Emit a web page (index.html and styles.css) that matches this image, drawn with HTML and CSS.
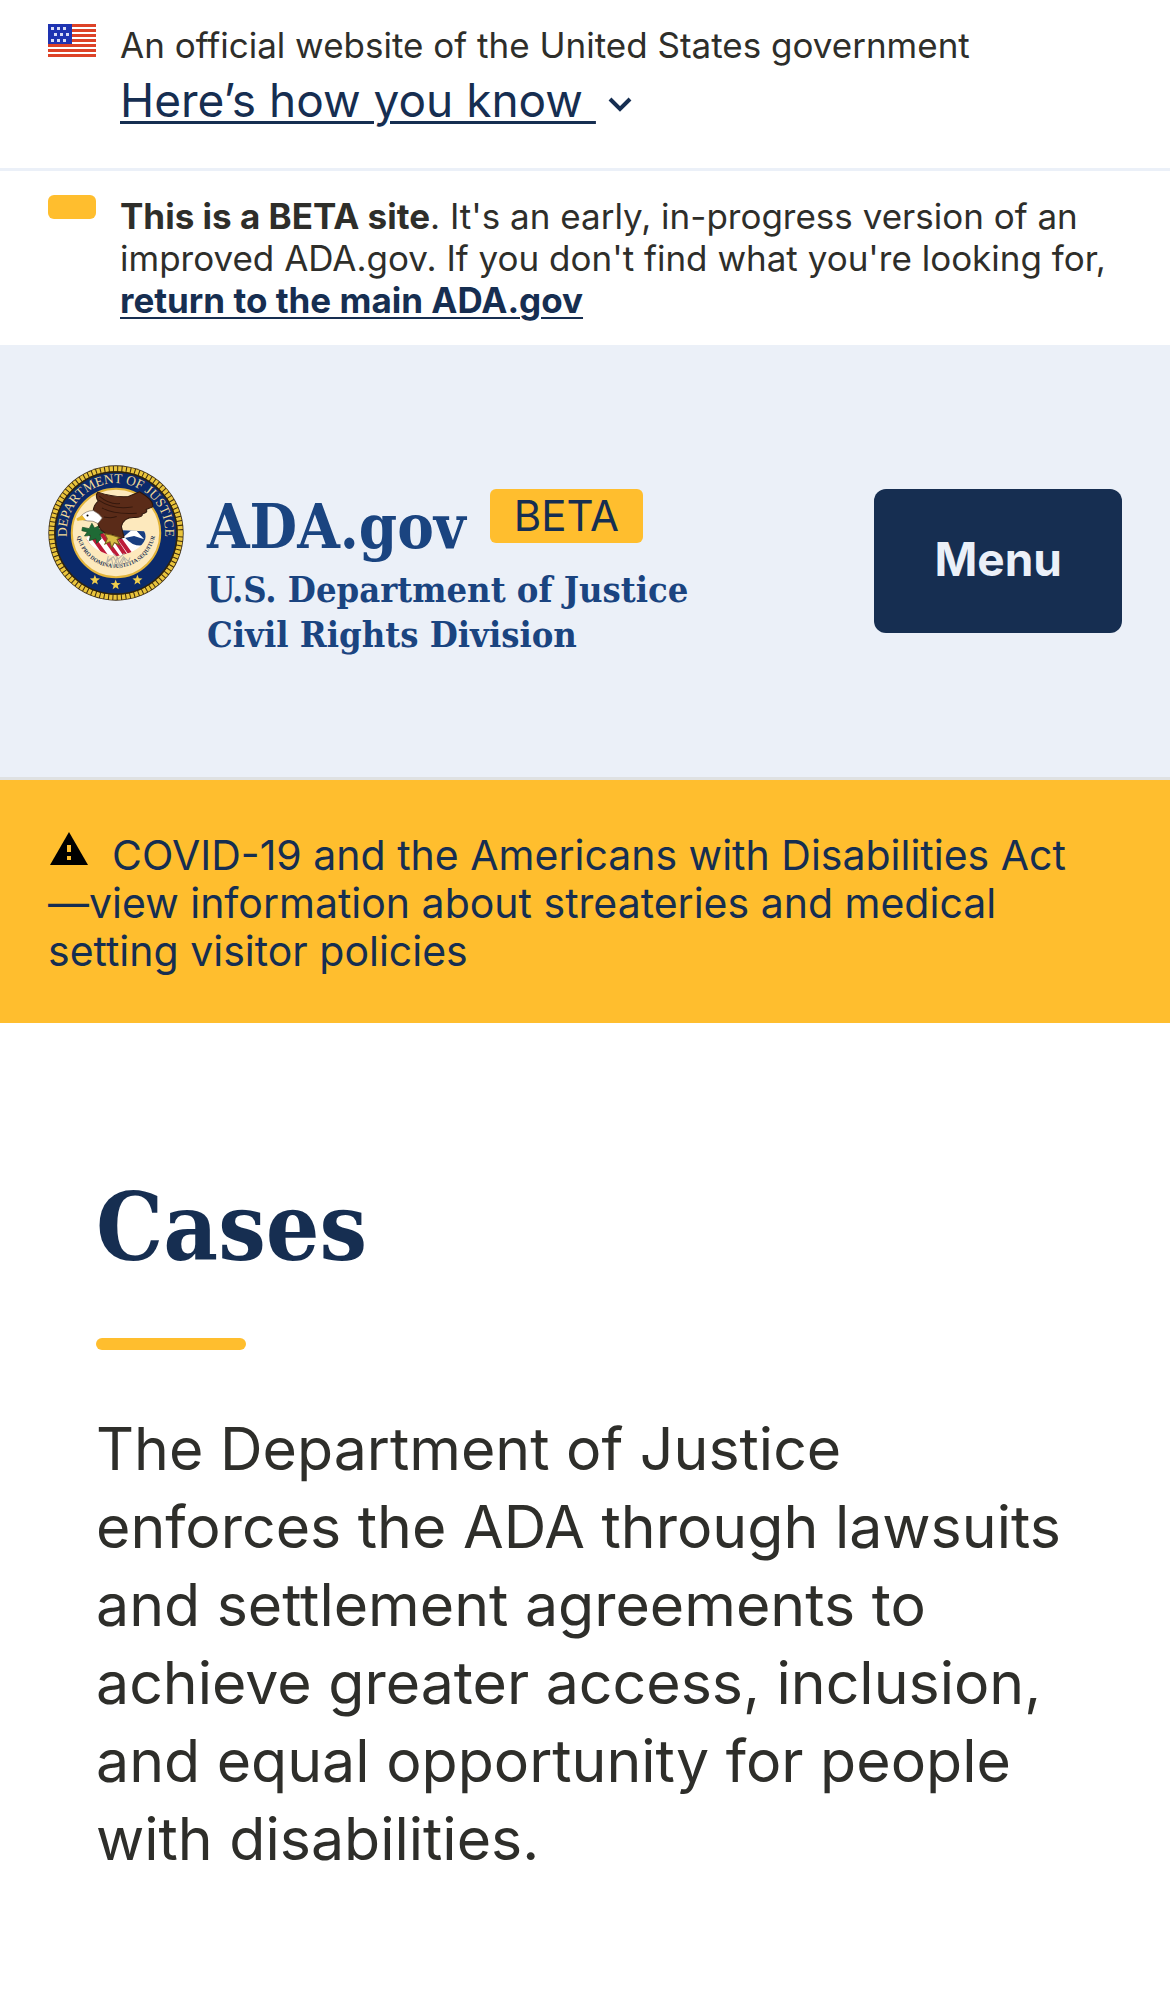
FILE: index.html
```html
<!DOCTYPE html>
<html lang="en">
<head>
<meta charset="utf-8">
<meta name="viewport" content="width=device-width, initial-scale=1">
<title>Cases | ADA.gov</title>
<link rel="stylesheet" href="styles.css">
</head>
<body>
<section class="banner" aria-label="Official government website">
  <svg class="flag" viewBox="0 0 48 33" aria-hidden="true">
    <rect width="48" height="33" fill="#fff"/>
    <path d="M0 1.5h48M0 6.5h48M0 11.5h48M0 16.5h48M0 21.5h48M0 26.5h48M0 31.5h48" stroke="#dd4227" stroke-width="3"/>
    <rect width="24" height="20" fill="#1e33b1"/>
    <path d="M3 4.500h3m3 0h3m3 0h3M6 10.500h3m3 0h3m3 0h3M3 16.500h3m3 0h3m3 0h3" stroke="#d9dcf6" stroke-width="3"/>
  </svg>
  <div class="banner-text">
    <p>An official website of the United States government</p>
    <button class="know" type="button"><span class="know-label">Here’s how you know&nbsp;</span><svg class="caret" viewBox="0 0 24 15" aria-hidden="true"><path d="M2 2l10 10L22 2" fill="none" stroke="#162e51" stroke-width="4"/></svg></button>
  </div>
</section>
<section class="beta" aria-label="Beta notice">
  <span class="beta-chip"></span>
  <p><strong>This is a BETA site</strong>. It's an early, in-progress version of an improved ADA.gov. If you don't find what you're looking for, <a href="#main">return to the main ADA.gov</a></p>
</section>
<header class="header">
  <a class="logo" href="#home">
    <svg class="seal" viewBox="25 30 406 406" role="img" aria-label="Department of Justice seal">
      <defs>
        <path id="arc-top" d="M88 276A147 147 0 1 1 368 276"/>
        <path id="arc-bottom" d="M109 218A119 119 0 1 0 347 218"/>
        <clipPath id="shield"><path d="M139 250Q155 228 180 222L312 228Q322 245 311 260Q290 292 230 302Q165 292 139 250z"/></clipPath>
      </defs>
      <circle cx="228" cy="233" r="202" fill="#3c2c12"/>
      <circle cx="228" cy="233" r="192" fill="none" stroke="#e9c43c" stroke-width="15" stroke-dasharray="10 3"/>
      <circle cx="228" cy="233" r="182" fill="#0b2a6b" stroke="#2d230f" stroke-width="4"/>
      <circle cx="228" cy="233" r="132" fill="#fde9bd" stroke="#e3b53b" stroke-width="6"/>
      <text class="seal-name"><textPath href="#arc-top" startOffset="50%">DEPARTMENT OF JUSTICE</textPath></text>
      <text class="seal-motto"><textPath href="#arc-bottom" startOffset="50%">QUI PRO DOMINA JUSTITIA SEQUITUR</textPath></text>
      <g clip-path="url(#shield)">
        <rect x="130" y="215" width="200" height="95" fill="#fff"/>
        <path d="M140 220l65 90M170 215l65 90M200 215l60 90M228 235l50 70M120 235l60 80" stroke="#bd1b38" stroke-width="12"/>
        <path d="M236 222h90v42q-24 12-48 2q-24-14-42-44z" fill="#193e80"/>
        <path d="M244 250l38-32 30 34-30-10z" fill="#fff"/>
      </g>
      <path d="M205 302l-5 20 15-12 5 24 12-28 8 30 12-28 8 22 10-24M200 318l20-14 15 26 15-26 20 18M220 294l15 16 18-16" fill="none" stroke="#b5b2a6" stroke-width="3"/>
      <path d="M126 226l16 4-8 12 18-2-4 16 20-6 2 14 14-14-4-14 12-4-16-12 4-10-16 8-8-14-8 16-20-4z" fill="#1f6a35" stroke="#174a25" stroke-width="2"/>
      <path d="M142 190L160 180Q157 153 175 138Q164 122 174 111Q220 127 265 124L298 110Q344 137 337 155L318 163Q325 172 306 176Q310 185 286 187Q252 184 244 213L252 246L228 252L218 237Q197 247 194 232Q177 222 172 198z" fill="#5a2b18" stroke="#2d160c" stroke-width="3"/>
      <path d="M178 123Q210 150 240 145M176 135Q220 165 278 155M186 158Q220 178 290 174M192 185Q215 190 230 184" fill="none" stroke="#35180d" stroke-width="3"/>
      <path d="M122 184Q138 166 160 166Q178 175 187 188L174 205Q160 195 144 197Q134 196 122 190z" fill="#fff" stroke="#766b5e" stroke-width="2"/>
      <path d="M127 180L110 190Q111 200 118 196L138 194z" fill="#e8b62a"/>
      <circle cx="143" cy="181" r="3"/>
      <path d="M194 235l8 15-7 16 15-7 5 18 8-15 16 7-8-17 9-5-25-8z" fill="#d8bd45" stroke="#765f1b" stroke-width="3"/>
      <path id="star" fill="#f1ce4c" d="M227 372l4 10 11 1-9 7 3 11-9-6-9 6 3-11-9-7 11-1z"/>
      <use href="#star" x="-62" y="-14"/>
      <use href="#star" x="65" y="-14"/>
    </svg>
    <span class="logo-text">
      <span class="title-row"><span class="title">ADA.gov</span><span class="badge">BETA</span></span>
      <span class="agency">U.S. Department of Justice<br>Civil Rights Division</span>
    </span>
  </a>
  <button class="menu" type="button">Menu</button>
</header>
<aside class="alert">
  <a href="#covid"><svg class="warn" viewBox="0 0 38 33" aria-hidden="true"><path d="M19 0L38 33H0z"/><path d="M19 13v7m0 4v4" stroke="#ffbe2e" stroke-width="4"/></svg>COVID-19 and the Americans with Disabilities Act<wbr><span class="keep">—view</span> information about streateries and medical setting visitor policies</a>
</aside>
<main class="main" id="main">
  <h1>Cases</h1>
  <p>The Department of Justice enforces the ADA through lawsuits and settlement agreements to achieve greater access, inclusion, and equal opportunity for people with disabilities.</p>
</main>
</body>
</html>
```
FILE: styles.css
```css
* { box-sizing: border-box; }
body {
  margin: 0;
  background: #fff;
  color: #2e2e2a;
  font-family: Inter, "Liberation Sans", sans-serif;
  font-size: 35px;
  line-height: 42px;
}
p, h1 { margin: 0; }
button { border: 0; font-family: inherit; cursor: pointer; }
a { color: #162e51; }

.banner, .beta { display: flex; gap: 24px; padding: 24px 48px; }
.banner { border-bottom: 3px solid #ebf0f8; padding-bottom: 34px; }
.flag { flex: none; width: 48px; height: 33px; }
.know {
  display: flex;
  align-items: center;
  gap: 12px;
  padding: 0;
  background: none;
  color: #162e51;
  font-size: 46px;
  line-height: 68px;
}
.know-label { text-decoration: underline; text-decoration-thickness: 3px; text-underline-offset: 4px; }
.caret { width: 24px; height: 15px; margin-top: 8px; }

.beta-chip { flex: none; width: 48px; height: 24px; border-radius: 6px; background: #ffbe2e; }
.beta a { font-weight: 700; text-decoration-thickness: 2px; text-underline-offset: 4px; }

.header {
  display: flex;
  justify-content: space-between;
  align-items: flex-start;
  padding: 120px 48px;
  background: #ebf0f8;
  border-bottom: 3px solid #dfe1e2;
}
.logo {
  display: flex;
  gap: 23px;
  color: #1a4480;
  font-family: "DejaVu Serif Condensed", "DejaVu Serif", serif;
  font-stretch: condensed;
  font-weight: 700;
  text-decoration: none;
}
.seal { flex: none; width: 136px; height: 136px; }
.seal-name, .seal-motto { font-family: "Liberation Serif", serif; text-anchor: middle; }
.seal-name { font-size: 40px; font-weight: 400; fill: #f3db98; }
.seal-motto { font-size: 17px; fill: #263554; }
.logo-text { display: flex; flex-direction: column; padding-top: 24px; }
.title-row { display: flex; align-items: flex-start; gap: 24px; }
.title { font-size: 61px; line-height: 75px; }
.badge {
  padding: 0 24px;
  border-radius: 6px;
  background: #ffbe2e;
  color: #162e51;
  font: 400 42px/54px Inter, sans-serif;
}
.agency { padding-top: 3px; font-size: 36px; line-height: 45px; }
.menu {
  margin-top: 24px;
  padding: 0 60px 4px;
  border-radius: 12px;
  background: #162e51;
  color: #ebf0f8;
  font-size: 46px;
  font-weight: 700;
  line-height: 140px;
}

.alert { padding: 51px 48px 48px; background: #ffbe2e; font-size: 41px; line-height: 48px; }
.alert a { text-decoration: none; }
.warn { width: 38px; height: 33px; margin: 0 24px 5px 2px; vertical-align: baseline; }
.keep { display: inline-block; }

.main { padding: 144px 96px 96px; font-size: 59px; line-height: 78px; }
h1 {
  color: #162e51;
  font-family: "DejaVu Serif Condensed", "DejaVu Serif", serif;
  font-stretch: condensed;
  font-size: 94px;
  line-height: 120px;
}
h1::after {
  content: "";
  display: block;
  width: 150px;
  height: 12px;
  margin: 51px 0 60px;
  border-radius: 6px;
  background: #ffbe2e;
}
```
